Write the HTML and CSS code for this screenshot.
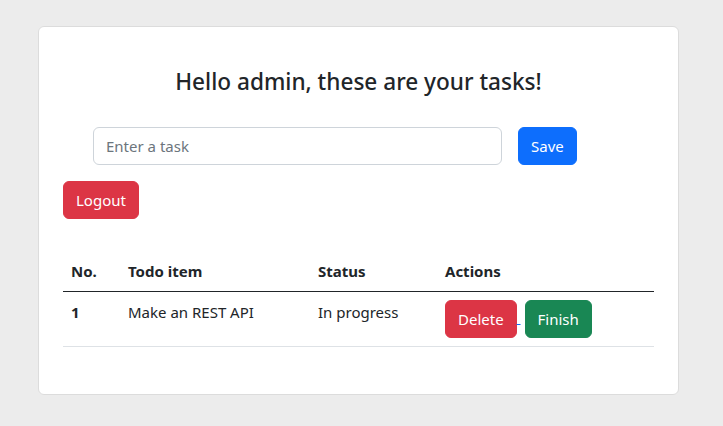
FILE: index.html
```html
<!DOCTYPE html>
<html lang="en">
<head>
<meta charset="utf-8">
<title>Tasks</title>
<link rel="stylesheet" href="styles.css">
</head>
<body>
<div class="page">
  <div class="card">
    <h3 class="title">Hello admin, these are your tasks!</h3>
    <form class="task-form">
      <input class="task-input" type="text" placeholder="Enter a task">
      <button type="button" class="btn btn-primary">Save</button>
    </form>
    <button type="button" class="btn btn-danger logout">Logout</button>
    <table class="table">
      <thead>
        <tr><th class="c-no">No.</th><th class="c-item">Todo item</th><th class="c-status">Status</th><th>Actions</th></tr>
      </thead>
      <tbody>
        <tr>
          <th>1</th>
          <td>Make an REST API</td>
          <td>In progress</td>
          <td class="actions"><a class="act-link" href="#"><button type="button" class="btn btn-danger">Delete</button> </a><button type="button" class="btn btn-success finish">Finish</button></td>
        </tr>
      </tbody>
    </table>
  </div>
</div>
</body>
</html>
```
FILE: styles.css
```css
* { box-sizing: border-box; }
html, body { margin: 0; padding: 0; }
body {
  background: #ececec;
  font-family: "Noto Sans", "Open Sans", sans-serif;
  font-size: 15px;
  line-height: 24px;
  color: #212529;
}
.page { padding: 26px 44px 0 38px; }
.card {
  width: 641px;
  height: 369px;
  background: #fff;
  border: 1px solid #dcdcdc;
  border-radius: 6px;
  padding: 24px;
}
.title {
  margin: 16px 0 30px;
  text-align: center;
  font-size: 22.6px;
  font-weight: 500;
  line-height: 30px;
}
.task-form {
  display: flex;
  align-items: center;
  gap: 16px;
  padding-left: 30px;
  margin: 0 0 16px;
}
.task-input {
  width: 409px;
  height: 38px;
  border: 1px solid #ced4da;
  border-radius: 6px;
  padding: 6px 12px;
  font: inherit;
  color: #212529;
}
.task-input::placeholder { color: #6c757d; }
.btn {
  display: inline-block;
  height: 38px;
  padding: 6px 12px;
  border: 1px solid transparent;
  border-radius: 6px;
  font: inherit;
  line-height: 24px;
  color: #fff;
  cursor: pointer;
  vertical-align: middle;
}
.btn-primary { background: #0d6efd; border-color: #0d6efd; }
.btn-danger { background: #dc3545; border-color: #dc3545; }
.btn-success { background: #198754; border-color: #198754; }
.logout { display: block; margin-bottom: 32px; }
.table {
  width: 100%;
  border-collapse: collapse;
}
.table th, .table td {
  text-align: left;
  vertical-align: top;
  padding: 8px;
  line-height: 24px;
}
.table thead th { font-weight: 700; border-bottom: 1px solid #212529; }
.table tbody th, .table tbody td { border-bottom: 1px solid #dee2e6; }
.table tbody th { font-weight: 700; }
.c-no { width: 57px; }
.c-item { width: 190px; }
.c-status { width: 127px; }
.actions { white-space: nowrap; }
.act-link { color: #0d6efd; text-decoration: underline; }
.finish { margin-left: 4px; }
```
